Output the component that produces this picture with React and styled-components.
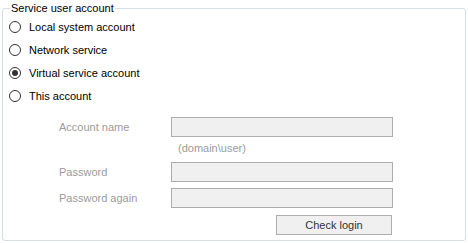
import React, { useState } from "react";
import styled, { createGlobalStyle } from "styled-components";

const Global = createGlobalStyle`
  html, body { margin: 0; padding: 0; background: #ffffff; }
  body { font-family: "Liberation Sans", Arial, sans-serif; font-size: 11px; color: #000; }
`;

const Page = styled.div`
  width: 468px;
  height: 243px;
  padding: 1px 0 0 2px;
  box-sizing: border-box;
`;

const Group = styled.fieldset`
  margin: 0;
  padding: 0 0 0 6px;
  width: 464px;
  height: 240px;
  box-sizing: border-box;
  border: 1px solid #d5dfe5;
  border-radius: 3px;
  min-width: 0;
`;

const Legend = styled.legend`
  margin-left: 1px;
  padding: 0 1px;
  line-height: 14px;
  font-size: 11px;
  color: #000;
`;

const RadioList = styled.div`
  display: flex;
  flex-direction: column;
`;

const RadioRow = styled.label`
  display: flex;
  align-items: center;
  height: 23px;
  gap: 8px;
  cursor: default;
`;

const Circle = styled.span`
  width: 12px;
  height: 12px;
  box-sizing: border-box;
  border: 1px solid #333333;
  border-radius: 50%;
  background: #ffffff;
  display: flex;
  align-items: center;
  justify-content: center;
  &::after {
    content: "";
    width: 6px;
    height: 6px;
    border-radius: 50%;
    background: ${(p) => (p.$on ? "#333333" : "transparent")};
  }
`;

const Form = styled.div`
  display: grid;
  grid-template-columns: 112px 222px;
  padding-left: 50px;
  margin-top: 10px;
`;

const FieldLabel = styled.span`
  display: flex;
  align-items: center;
  color: #9b9b9b;
  height: 20px;
  margin-top: ${(p) => p.$top || 0}px;
`;

const TextBox = styled.div`
  height: 20px;
  box-sizing: border-box;
  border: 1px solid #adadad;
  background: #f0f0f0;
  margin-top: ${(p) => p.$top || 0}px;
`;

const Hint = styled.span`
  grid-column: 2;
  padding-left: 7px;
  margin-top: 4px;
  line-height: 14px;
  color: #9b9b9b;
`;

const ButtonCell = styled.div`
  grid-column: 2;
  display: flex;
  justify-content: flex-end;
  margin-top: 7px;
  padding-right: 1px;
`;

const Button = styled.button`
  width: 116px;
  height: 20px;
  box-sizing: border-box;
  border: 1px solid #adadad;
  background: #f0f0f0;
  font-family: "Liberation Sans", Arial, sans-serif;
  font-size: 11px;
  color: #333333;
  padding: 0;
`;

const options = [
  "Local system account",
  "Network service",
  "Virtual service account",
  "This account",
];

export default function App() {
  const [sel, setSel] = useState(2);
  return (
    <Page>
      <Global />
      <Group>
        <Legend>Service user account</Legend>
        <RadioList>
          {options.map((o, i) => (
            <RadioRow key={o} onClick={() => setSel(i)}>
              <Circle $on={sel === i} />
              {o}
            </RadioRow>
          ))}
        </RadioList>
        <Form>
          <FieldLabel>Account name</FieldLabel>
          <TextBox />
          <Hint>(domain\user)</Hint>
          <FieldLabel $top={7}>Password</FieldLabel>
          <TextBox $top={7} />
          <FieldLabel $top={6}>Password again</FieldLabel>
          <TextBox $top={6} />
          <ButtonCell>
            <Button>Check login</Button>
          </ButtonCell>
        </Form>
      </Group>
    </Page>
  );
}
